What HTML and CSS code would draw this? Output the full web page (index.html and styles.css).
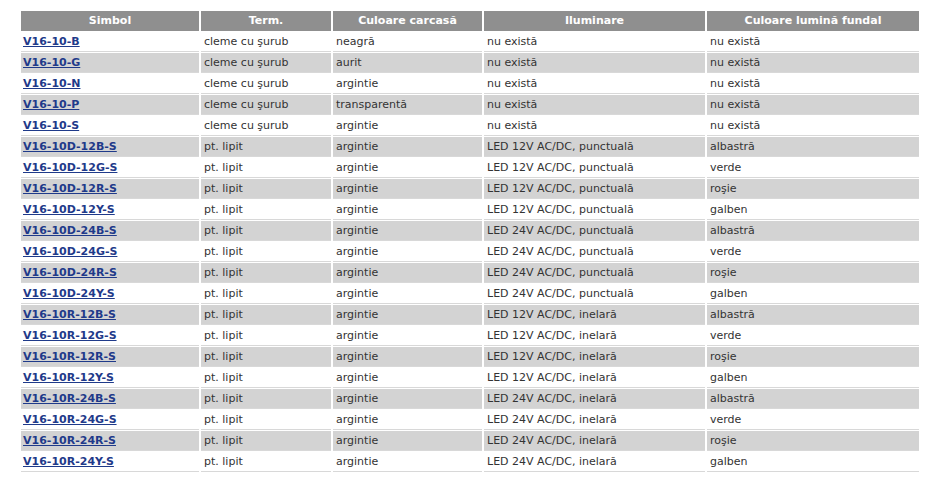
FILE: index.html
```html
<!DOCTYPE html>
<html lang="ro">
<head>
<meta charset="utf-8">
<title>V16</title>
<link rel="stylesheet" href="styles.css">
</head>
<body>
<div class="wrap">
<table class="prod">
<colgroup>
<col class="c1"><col class="c2"><col class="c3"><col class="c4"><col class="c5">
</colgroup>
<thead>
<tr><th>Simbol</th><th>Term.</th><th>Culoare carcasă</th><th>Iluminare</th><th>Culoare lumină fundal</th></tr>
</thead>
<tbody>
<tr><td><a href="#">V16-10-B</a></td><td>cleme cu şurub</td><td>neagră</td><td>nu există</td><td>nu există</td></tr>
<tr class="alt"><td><a href="#">V16-10-G</a></td><td>cleme cu şurub</td><td>aurit</td><td>nu există</td><td>nu există</td></tr>
<tr><td><a href="#">V16-10-N</a></td><td>cleme cu şurub</td><td>argintie</td><td>nu există</td><td>nu există</td></tr>
<tr class="alt"><td><a href="#">V16-10-P</a></td><td>cleme cu şurub</td><td>transparentă</td><td>nu există</td><td>nu există</td></tr>
<tr><td><a href="#">V16-10-S</a></td><td>cleme cu şurub</td><td>argintie</td><td>nu există</td><td>nu există</td></tr>
<tr class="alt"><td><a href="#">V16-10D-12B-S</a></td><td>pt. lipit</td><td>argintie</td><td>LED 12V AC/DC, punctuală</td><td>albastră</td></tr>
<tr><td><a href="#">V16-10D-12G-S</a></td><td>pt. lipit</td><td>argintie</td><td>LED 12V AC/DC, punctuală</td><td>verde</td></tr>
<tr class="alt"><td><a href="#">V16-10D-12R-S</a></td><td>pt. lipit</td><td>argintie</td><td>LED 12V AC/DC, punctuală</td><td>roşie</td></tr>
<tr><td><a href="#">V16-10D-12Y-S</a></td><td>pt. lipit</td><td>argintie</td><td>LED 12V AC/DC, punctuală</td><td>galben</td></tr>
<tr class="alt"><td><a href="#">V16-10D-24B-S</a></td><td>pt. lipit</td><td>argintie</td><td>LED 24V AC/DC, punctuală</td><td>albastră</td></tr>
<tr><td><a href="#">V16-10D-24G-S</a></td><td>pt. lipit</td><td>argintie</td><td>LED 24V AC/DC, punctuală</td><td>verde</td></tr>
<tr class="alt"><td><a href="#">V16-10D-24R-S</a></td><td>pt. lipit</td><td>argintie</td><td>LED 24V AC/DC, punctuală</td><td>roşie</td></tr>
<tr><td><a href="#">V16-10D-24Y-S</a></td><td>pt. lipit</td><td>argintie</td><td>LED 24V AC/DC, punctuală</td><td>galben</td></tr>
<tr class="alt"><td><a href="#">V16-10R-12B-S</a></td><td>pt. lipit</td><td>argintie</td><td>LED 12V AC/DC, inelară</td><td>albastră</td></tr>
<tr><td><a href="#">V16-10R-12G-S</a></td><td>pt. lipit</td><td>argintie</td><td>LED 12V AC/DC, inelară</td><td>verde</td></tr>
<tr class="alt"><td><a href="#">V16-10R-12R-S</a></td><td>pt. lipit</td><td>argintie</td><td>LED 12V AC/DC, inelară</td><td>roşie</td></tr>
<tr><td><a href="#">V16-10R-12Y-S</a></td><td>pt. lipit</td><td>argintie</td><td>LED 12V AC/DC, inelară</td><td>galben</td></tr>
<tr class="alt"><td><a href="#">V16-10R-24B-S</a></td><td>pt. lipit</td><td>argintie</td><td>LED 24V AC/DC, inelară</td><td>albastră</td></tr>
<tr><td><a href="#">V16-10R-24G-S</a></td><td>pt. lipit</td><td>argintie</td><td>LED 24V AC/DC, inelară</td><td>verde</td></tr>
<tr class="alt"><td><a href="#">V16-10R-24R-S</a></td><td>pt. lipit</td><td>argintie</td><td>LED 24V AC/DC, inelară</td><td>roşie</td></tr>
<tr><td><a href="#">V16-10R-24Y-S</a></td><td>pt. lipit</td><td>argintie</td><td>LED 24V AC/DC, inelară</td><td>galben</td></tr>
</tbody>
</table>
</div>
</body>
</html>
```
FILE: styles.css
```css
html, body {
  margin: 0;
  padding: 0;
  background: #fff;
}
.wrap {
  padding: 10px 0 0 19px;
}
.prod {
  border-collapse: separate;
  border-spacing: 2px 1px;
  table-layout: fixed;
  width: 902px;
  font-family: "DejaVu Sans", Verdana, sans-serif;
  font-size: 11px;
  color: #333;
}
.c1 { width: 178px; }
.c2 { width: 130px; }
.c3 { width: 149px; }
.c4 { width: 221px; }
.c5 { width: 212px; }
.prod th {
  background: #8f8f8f;
  color: #fff;
  font-weight: bold;
  text-align: center;
  height: 20px;
  padding: 0 3px;
  line-height: 20px;
  box-sizing: border-box;
}
.prod td {
  padding: 2px 3px 2px 3px;
  line-height: 15px;
  height: 20px;
  box-sizing: border-box;
  border-bottom: 1px solid #d8d8d8;
  text-align: left;
  white-space: nowrap;
}
.prod td:first-child {
  padding-left: 2px;
}
.prod tr.alt td {
  background: #d3d3d3;
}
.prod a {
  color: #1f3a8a;
  font-weight: bold;
  font-size: 11px;
  text-decoration: underline;
}
```
